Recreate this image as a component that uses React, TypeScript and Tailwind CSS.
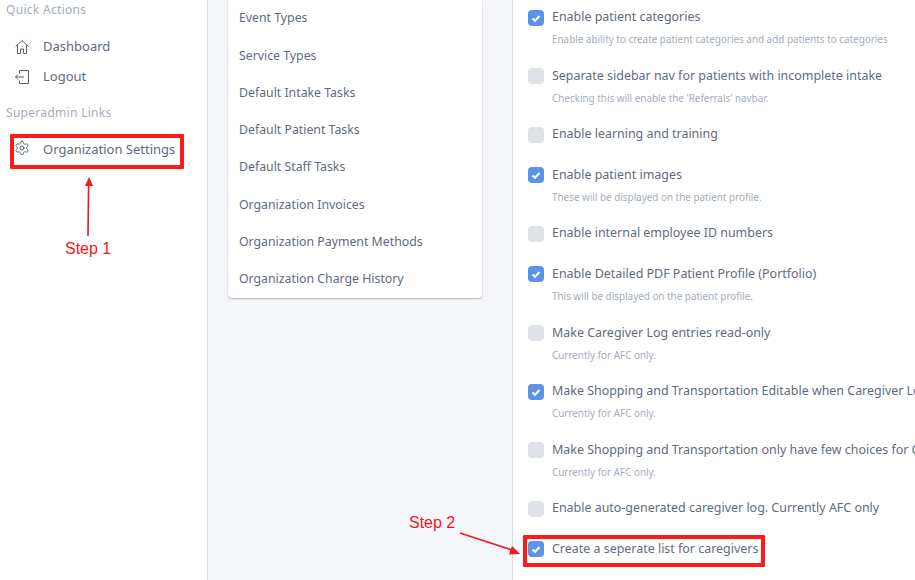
import React from 'react';

const font = "[font-family:'Noto_Sans',sans-serif]";

const settingsLinks = [
  'Event Types',
  'Service Types',
  'Default Intake Tasks',
  'Default Patient Tasks',
  'Default Staff Tasks',
  'Organization Invoices',
  'Organization Payment Methods',
  'Organization Charge History',
];

const options = [
  { label: 'Enable patient categories', help: 'Enable ability to create patient categories and add patients to categories', checked: true },
  { label: 'Separate sidebar nav for patients with incomplete intake', help: "Checking this will enable the 'Referrals' navbar.", checked: false },
  { label: 'Enable learning and training', checked: false },
  { label: 'Enable patient images', help: 'These will be displayed on the patient profile.', checked: true },
  { label: 'Enable internal employee ID numbers', checked: false },
  { label: 'Enable Detailed PDF Patient Profile (Portfolio)', help: 'This will be displayed on the patient profile.', checked: true },
  { label: 'Make Caregiver Log entries read-only', help: 'Currently for AFC only.', checked: false },
  { label: 'Make Shopping and Transportation Editable when Caregiver Log is read-only', help: 'Currently for AFC only.', checked: true },
  { label: 'Make Shopping and Transportation only have few choices for Caregiver Log', help: 'Currently for AFC only.', checked: false },
  { label: 'Enable auto-generated caregiver log. Currently AFC only', checked: false },
  { label: 'Create a seperate list for caregivers', checked: true },
];

const HomeIcon = () => (
  <svg width="16" height="16" viewBox="0 0 16 16" fill="none" stroke="#566178" strokeWidth="1" strokeLinejoin="round">
    <path d="M1.5 7.5 8 1.5l6.5 6" />
    <path d="M3.5 6v8.5h3V10h3v4.5h3V6" />
  </svg>
);

const LogoutIcon = () => (
  <svg width="16" height="16" viewBox="0 0 16 16" fill="none" stroke="#566178" strokeWidth="1" strokeLinejoin="round">
    <path d="M5.5 4.5V1.5h9v13h-9v-3" />
    <path d="M10 8H1.5M4 5.5 1.5 8 4 10.5" />
  </svg>
);

const GearIcon = () => (
  <svg className="-translate-y-[2px]" width="16" height="16" viewBox="0 0 24 24" fill="none" stroke="#566178" strokeWidth="1.5" strokeLinecap="round" strokeLinejoin="round">
    <path d="M12.22 2h-.44a2 2 0 0 0-2 2v.18a2 2 0 0 1-1 1.73l-.43.25a2 2 0 0 1-2 0l-.15-.08a2 2 0 0 0-2.73.73l-.22.38a2 2 0 0 0 .73 2.73l.15.1a2 2 0 0 1 1 1.72v.51a2 2 0 0 1-1 1.74l-.15.09a2 2 0 0 0-.73 2.73l.22.38a2 2 0 0 0 2.73.73l.15-.08a2 2 0 0 1 2 0l.43.25a2 2 0 0 1 1 1.73V20a2 2 0 0 0 2 2h.44a2 2 0 0 0 2-2v-.18a2 2 0 0 1 1-1.73l.43-.25a2 2 0 0 1 2 0l.15.08a2 2 0 0 0 2.73-.73l.22-.39a2 2 0 0 0-.73-2.73l-.15-.08a2 2 0 0 1-1-1.74v-.5a2 2 0 0 1 1-1.74l.15-.09a2 2 0 0 0 .73-2.73l-.22-.38a2 2 0 0 0-2.73-.73l-.15.08a2 2 0 0 1-2 0l-.43-.25a2 2 0 0 1-1-1.73V4a2 2 0 0 0-2-2z" />
    <circle cx="12" cy="12" r="3" />
  </svg>
);

const Checkbox = ({ checked }: { checked: boolean }) => (
  <span className={`flex h-4 w-4 shrink-0 items-center justify-center rounded-[4px] ${checked ? 'bg-[#5b93e6]' : 'bg-[#dee2e6]'}`}>
    {checked && (
      <svg width="10" height="10" viewBox="0 0 10 10" fill="none" stroke="#fff" strokeWidth="2">
        <path d="M1.5 5.5 4 7.8 8.5 3" />
      </svg>
    )}
  </span>
);

const NavItem = ({ icon, label, className = '' }: { icon: React.ReactNode; label: string; className?: string }) => (
  <div className={`flex h-[30px] items-center pl-[14px] ${className}`}>
    <span className="w-[29px]">{icon}</span>
    <span className="text-[13px] whitespace-nowrap text-[#5f6b7c]">{label}</span>
  </div>
);

const Annotations = () => (
  <>
    <div className="absolute top-[134px] left-[10px] h-[35px] w-[174px] rounded-[1px] border-[4px] border-[#ff1a1a]" />
    <div className="absolute top-[535px] left-[523px] h-[32px] w-[242px] rounded-[1px] border-[4px] border-[#ff1a1a]" />
    <span className="absolute top-[239px] left-[65px] text-[16px] leading-[20px] text-[#f01818] [font-family:'Liberation_Sans',sans-serif]">Step 1</span>
    <span className="absolute top-[513px] left-[409px] text-[16px] leading-[20px] text-[#f01818] [font-family:'Liberation_Sans',sans-serif]">Step 2</span>
    <svg className="absolute top-[171px] left-[80px]" width="16" height="66" viewBox="0 0 16 66">
      <path d="M8 65 8.6 14" stroke="#f01818" strokeWidth="1.6" fill="none" />
      <path d="M9 6 5 15h8z" fill="#f01818" />
    </svg>
    <svg className="absolute top-[530px] left-[458px]" width="66" height="30" viewBox="0 0 66 30">
      <path d="M2 3 54 20" stroke="#f01818" strokeWidth="1.6" fill="none" />
      <path d="M62 24 51 24.5 54 16z" fill="#f01818" />
    </svg>
  </>
);

export default function App() {
  return (
    <div className={`relative flex h-[580px] w-[915px] overflow-hidden bg-white ${font}`}>
      <aside className="w-[208px] shrink-0 border-r border-[#d9dce1] bg-white">
        <h6 className="mt-[0.5px] ml-[6px] text-[12px] leading-[18px] tracking-[0.3px] text-[#a3adba]">Quick Actions</h6>
        <div className="mt-[13.5px]">
          <NavItem icon={<HomeIcon />} label="Dashboard" />
          <NavItem icon={<LogoutIcon />} label="Logout" />
        </div>
        <h6 className="mt-[12px] ml-[6px] text-[12px] leading-[18px] tracking-[0.3px] text-[#a3adba]">Superadmin Links</h6>
        <NavItem icon={<GearIcon />} label="Organization Settings" className="mt-[13px]" />
      </aside>

      <main className="w-[304px] shrink-0 bg-[#f5f6fa] pl-[20px]">
        <ul className="w-[254px] rounded-b-[4px] bg-white pl-[11px] shadow-[0_1px_2px_rgba(0,0,0,0.25)]">
          {settingsLinks.map((link) => (
            <li key={link} className="flex h-[37.25px] items-center text-[12.3px] whitespace-nowrap text-[#5f6b7c]">
              {link}
            </li>
          ))}
        </ul>
      </main>

      <section className="min-w-0 flex-1 border-l border-[#d9dce1] bg-white pt-[6px] pl-[15px]">
        {options.map((opt) => (
          <div key={opt.label} className="mb-[19.6px] flex gap-[8px]">
            <span className="mt-[3.5px]"><Checkbox checked={opt.checked} /></span>
            <div className="min-w-0">
              <div className="text-[12.45px] leading-[21px] whitespace-nowrap text-[#5f6b7c]">{opt.label}</div>
              {opt.help && <div className="mt-[3px] -mb-[3px] text-[9.9px] leading-[18px] whitespace-nowrap text-[#a3adba]">{opt.help}</div>}
            </div>
          </div>
        ))}
      </section>

      <Annotations />
    </div>
  );
}
